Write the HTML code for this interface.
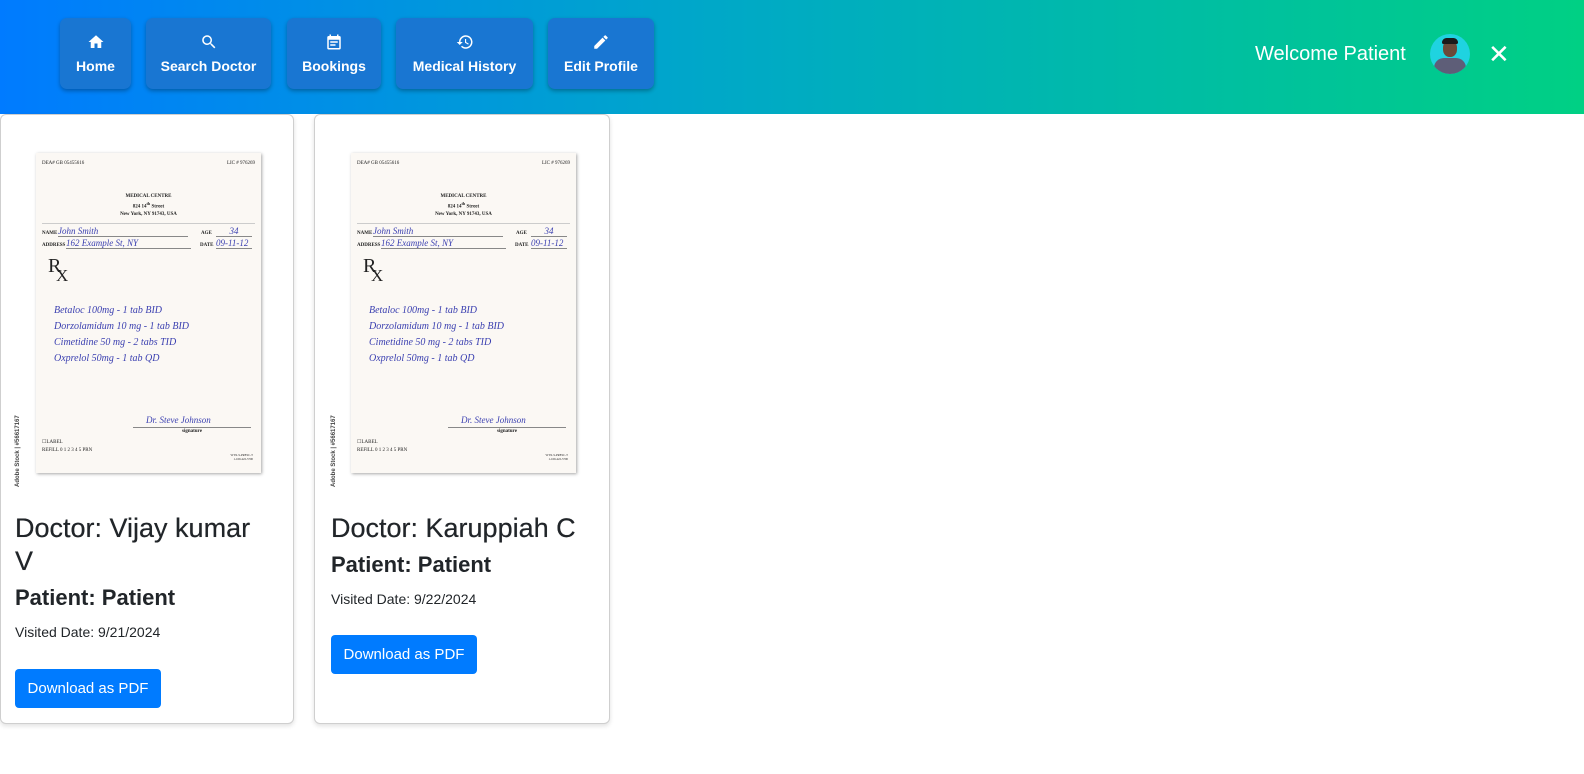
<!DOCTYPE html>
<html><head><meta charset="utf-8">
<style>
*{box-sizing:border-box;margin:0;padding:0}
body{width:1584px;height:774px;background:#fff;font-family:"Liberation Sans",sans-serif;position:relative;overflow:hidden}
.hdr{position:absolute;left:0;top:0;width:1584px;height:114px;background:linear-gradient(90deg,#007bff 0%,#00a8c8 45%,#00d084 100%)}
.nb{position:absolute;top:18px;height:71px;background:#1976d2;border-radius:7px;box-shadow:0 2px 4px rgba(0,0,0,.3);color:#fff;font-weight:bold;font-size:14px;text-align:center}
.nb svg{position:absolute;top:15px;left:50%;margin-left:-9px;width:18px;height:18px}
.nb span{position:absolute;top:40px;left:0;right:0}
.wel{position:absolute;left:1255px;top:43px;color:#fff;font-size:20px}
.av{position:absolute;left:1430px;top:34px;width:40px;height:40px;border-radius:50%;background:#1fd3e0;overflow:hidden}
.x{position:absolute;left:1488px;top:42px;color:#fff;font-size:26px;line-height:24px}
.card{position:absolute;top:114px;height:610px;border:1px solid #cfcfcf;border-radius:6px;box-shadow:0 2px 5px rgba(0,0,0,.12);background:#fff}
.paper{position:absolute;left:35px;top:38px;width:225px;height:320px;background:#fbf8f4;box-shadow:1px 1px 3px rgba(0,0,0,.35);font-family:"Liberation Serif",serif;color:#222;font-size:5px}
.hw{font-family:"Liberation Serif",serif;font-style:italic;color:#3a3fb0}
.t{position:absolute;white-space:nowrap}
.h1{position:absolute;left:14px;font-size:27px;color:#212529;line-height:33px;text-shadow:0 0 .4px #212529}
.h2{position:absolute;left:14px;font-size:22px;color:#212529;font-weight:bold}
.vd{position:absolute;left:14px;font-size:14px;color:#212529}
.btn{position:absolute;left:14px;width:146px;height:39px;background:#007bff;border-radius:4px;color:#fff;font-size:15px;line-height:39px;text-align:center}
.side{position:absolute;left:14px;top:372px;transform:rotate(-90deg);transform-origin:left top;font-size:6px;color:#444;font-weight:bold;white-space:nowrap}
</style></head><body>
<div class="hdr">
 <div class="nb" style="left:60px;width:71px"><svg viewBox="0 0 24 24"><path fill="#fff" d="M10 20v-6h4v6h5v-8h3L12 3 2 12h3v8z"/></svg><span>Home</span></div>
 <div class="nb" style="left:146px;width:125px"><svg viewBox="0 0 24 24"><path fill="#fff" d="M15.5 14h-.8l-.3-.3A6.5 6.5 0 1 0 9.5 16a6.5 6.5 0 0 0 4.2-1.6l.3.3v.8l5 5 1.5-1.5-5-5zm-6 0A4.5 4.5 0 1 1 14 9.5 4.5 4.5 0 0 1 9.5 14z"/></svg><span>Search Doctor</span></div>
 <div class="nb" style="left:287px;width:94px"><svg viewBox="0 0 24 24"><path fill="#fff" d="M19 4h-1V2h-2v2H8V2H6v2H5a2 2 0 0 0-2 2v14a2 2 0 0 0 2 2h14a2 2 0 0 0 2-2V6a2 2 0 0 0-2-2zm0 16H5V9h14zM7 11h10v2H7zm0 4h7v2H7z"/></svg><span>Bookings</span></div>
 <div class="nb" style="left:396px;width:137px"><svg viewBox="0 0 24 24"><path fill="#fff" d="M13 3a9 9 0 0 0-9 9H1l4 4 4-4H6a7 7 0 1 1 2.05 4.95l-1.42 1.420A9 9 0 1 0 13 3zm-1 5v5l4.25 2.52.77-1.28-3.52-2.09V8z"/></svg><span>Medical History</span></div>
 <div class="nb" style="left:548px;width:106px"><svg viewBox="0 0 24 24"><path fill="#fff" d="M3 17.25V21h3.75L17.8 9.94l-3.75-3.75zM20.7 7.04a1 1 0 0 0 0-1.41l-2.340-2.34a1 1 0 0 0-1.41 0l-1.83 1.83 3.75 3.75z"/></svg><span>Edit Profile</span></div>
 <div class="wel">Welcome Patient</div>
 <div class="av"><div style="position:absolute;left:13px;top:6px;width:14px;height:17px;border-radius:45%;background:#6b4a3a"></div><div style="position:absolute;left:12px;top:4px;width:16px;height:6px;border-radius:6px 6px 2px 2px;background:#1a1a1a"></div><div style="position:absolute;left:4px;top:24px;width:32px;height:20px;border-radius:10px 10px 0 0;background:#5e5e78"></div></div>
 <div class="x">✕</div>
</div>

<div class="card" style="left:0;width:294px">
 <div class="side">Adobe Stock | #56617167</div>
 <div class="paper">
  <div class="t" style="left:6px;top:8px">DEA# GB 05455616</div><div class="t" style="right:6px;top:8px">LIC # 976269</div>
  <div class="t" style="left:0;right:0;top:40px;text-align:center;font-weight:bold;line-height:7px">MEDICAL CENTRE<br>824 14<sup>th</sup> Street<br>New York, NY 91743, USA</div>
  <div style="position:absolute;left:6px;right:6px;top:70px;border-top:1px solid #ccc"></div>
  <div class="t" style="left:6px;top:78px;font-weight:bold">NAME</div><div class="t hw" style="left:22px;top:73px;font-size:9px;width:130px;border-bottom:1px solid #888">John Smith</div>
  <div class="t" style="left:165px;top:78px;font-weight:bold">AGE</div><div class="t hw" style="left:180px;top:73px;font-size:9px;width:36px;border-bottom:1px solid #888;text-align:center">34</div>
  <div class="t" style="left:6px;top:90px;font-weight:bold">ADDRESS</div><div class="t hw" style="left:30px;top:85px;font-size:9px;width:125px;border-bottom:1px solid #888">162 Example St, NY</div>
  <div class="t" style="left:164px;top:90px;font-weight:bold">DATE</div><div class="t hw" style="left:180px;top:85px;font-size:9px;width:36px;border-bottom:1px solid #888">09-11-12</div>
  <div class="t" style="left:12px;top:102px;font-size:20px">R</div><div class="t" style="left:20px;top:113px;font-size:17px">X</div>
  <div class="t hw" style="left:18px;top:150px;font-size:10px;line-height:16px">Betaloc 100mg - 1 tab BID<br>Dorzolamidum 10 mg - 1 tab BID<br>Cimetidine 50 mg - 2 tabs TID<br>Oxprelol 50mg - 1 tab QD</div>
  <div class="t hw" style="left:110px;top:262px;font-size:9px">Dr. Steve Johnson</div>
  <div style="position:absolute;left:97px;right:10px;top:274px;border-top:1px solid #888"></div>
  <div class="t" style="left:146px;top:276px;font-weight:bold">signature</div>
  <div class="t" style="left:6px;top:286px;line-height:8px">☐LABEL<br>REFILL 0 1 2 3 4 5 PRN</div>
  <div class="t" style="right:8px;top:300px;font-size:3px;text-align:right">WTX-S-PRESC-T<br>1-169-422-5700</div>
 </div>
 <div class="h1" style="top:397px">Doctor: Vijay kumar<br>V</div>
 <div class="h2" style="top:470px">Patient: Patient</div>
 <div class="vd" style="top:509px">Visited Date: 9/21/2024</div>
 <div class="btn" style="top:554px">Download as PDF</div>
</div>

<div class="card" style="left:314px;width:296px">
 <div class="side" style="left:16px">Adobe Stock | #56617167</div>
 <div class="paper" style="left:36px">
  <div class="t" style="left:6px;top:8px">DEA# GB 05455616</div><div class="t" style="right:6px;top:8px">LIC # 976269</div>
  <div class="t" style="left:0;right:0;top:40px;text-align:center;font-weight:bold;line-height:7px">MEDICAL CENTRE<br>824 14<sup>th</sup> Street<br>New York, NY 91743, USA</div>
  <div style="position:absolute;left:6px;right:6px;top:70px;border-top:1px solid #ccc"></div>
  <div class="t" style="left:6px;top:78px;font-weight:bold">NAME</div><div class="t hw" style="left:22px;top:73px;font-size:9px;width:130px;border-bottom:1px solid #888">John Smith</div>
  <div class="t" style="left:165px;top:78px;font-weight:bold">AGE</div><div class="t hw" style="left:180px;top:73px;font-size:9px;width:36px;border-bottom:1px solid #888;text-align:center">34</div>
  <div class="t" style="left:6px;top:90px;font-weight:bold">ADDRESS</div><div class="t hw" style="left:30px;top:85px;font-size:9px;width:125px;border-bottom:1px solid #888">162 Example St, NY</div>
  <div class="t" style="left:164px;top:90px;font-weight:bold">DATE</div><div class="t hw" style="left:180px;top:85px;font-size:9px;width:36px;border-bottom:1px solid #888">09-11-12</div>
  <div class="t" style="left:12px;top:102px;font-size:20px">R</div><div class="t" style="left:20px;top:113px;font-size:17px">X</div>
  <div class="t hw" style="left:18px;top:150px;font-size:10px;line-height:16px">Betaloc 100mg - 1 tab BID<br>Dorzolamidum 10 mg - 1 tab BID<br>Cimetidine 50 mg - 2 tabs TID<br>Oxprelol 50mg - 1 tab QD</div>
  <div class="t hw" style="left:110px;top:262px;font-size:9px">Dr. Steve Johnson</div>
  <div style="position:absolute;left:97px;right:10px;top:274px;border-top:1px solid #888"></div>
  <div class="t" style="left:146px;top:276px;font-weight:bold">signature</div>
  <div class="t" style="left:6px;top:286px;line-height:8px">☐LABEL<br>REFILL 0 1 2 3 4 5 PRN</div>
  <div class="t" style="right:8px;top:300px;font-size:3px;text-align:right">WTX-S-PRESC-T<br>1-169-422-5700</div>
 </div>
 <div class="h1" style="left:16px;top:397px">Doctor: Karuppiah C</div>
 <div class="h2" style="left:16px;top:437px">Patient: Patient</div>
 <div class="vd" style="left:16px;top:476px">Visited Date: 9/22/2024</div>
 <div class="btn" style="left:16px;top:520px">Download as PDF</div>
</div>
</body></html>
